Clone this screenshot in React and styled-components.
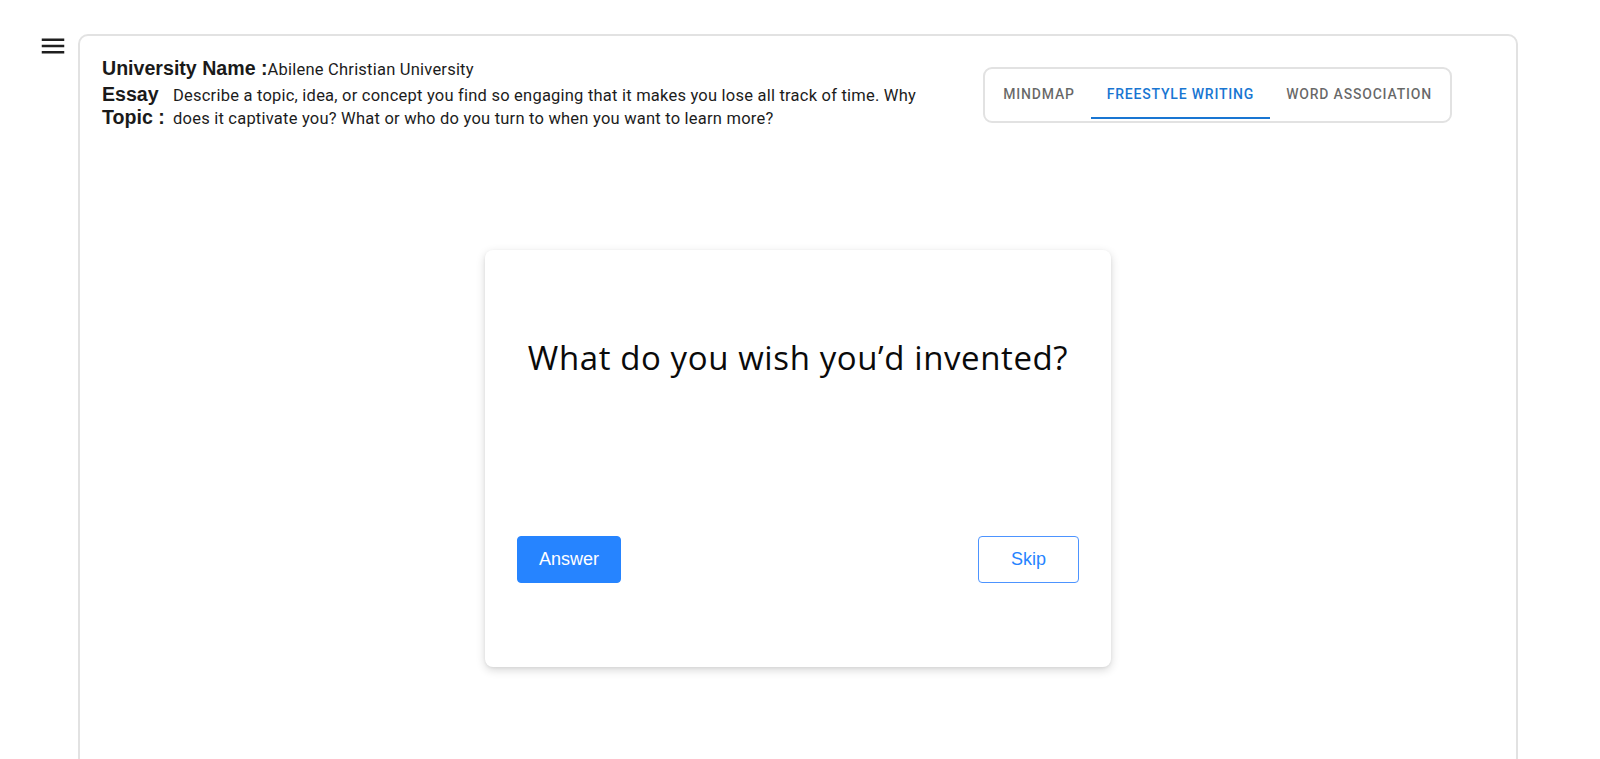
import React, { useState } from "react";
import styled, { createGlobalStyle } from "styled-components";

const GlobalStyle = createGlobalStyle`
  html, body {
    margin: 0;
    padding: 0;
    background: #ffffff;
    overflow: hidden;
    font-family: Roboto, "Liberation Sans", Arial, sans-serif;
  }
  * { box-sizing: border-box; }
`;

const Page = styled.div`
  display: flex;
  align-items: flex-start;
  padding: 31px 0 0 38px;
  height: 100vh;
`;

const MenuButton = styled.button`
  display: flex;
  align-items: center;
  justify-content: center;
  width: 30px;
  height: 30px;
  padding: 0;
  margin-right: 10px;
  border: none;
  background: transparent;
  color: #1f1f1f;
  cursor: pointer;
`;

const Panel = styled.main`
  width: 1440px;
  height: 800px;
  margin-top: 3px;
  border: 2px solid #e2e2e2;
  border-radius: 10px;
  padding-top: 19px;
  display: flex;
  flex-direction: column;
`;

const Header = styled.header`
  display: flex;
  justify-content: space-between;
  align-items: flex-start;
  padding: 0 64px 0 22px;
`;

const Info = styled.div`
  display: flex;
  flex-direction: column;
`;

const InfoRow = styled.div`
  display: flex;
  align-items: baseline;
  gap: ${(p) => p.$gap || 0}px;
`;

const Label = styled.span`
  font-family: "Liberation Sans", Arial, sans-serif;
  font-weight: 700;
  font-size: 19.6px;
  line-height: ${(p) => p.$lh || 27}px;
  color: #1a1a1a;
  ${(p) => (p.$width ? `width: ${p.$width}px; flex: none;` : "")}
`;

const Value = styled.span`
  font-family: Roboto, "Liberation Sans", sans-serif;
  font-size: 16.5px;
  letter-spacing: 0.22px;
  line-height: ${(p) => p.$lh || 27}px;
  color: #1c1c1c;
  ${(p) => (p.$width ? `width: ${p.$width}px;` : "")}
`;

const TabBox = styled.div`
  display: flex;
  margin-top: 12px;
  padding: 2px;
  border: 2px solid #e2e2e2;
  border-radius: 9px;
`;

const Tab = styled.button`
  position: relative;
  height: 48px;
  min-width: 90px;
  padding: 12px 16px;
  border: none;
  background: transparent;
  font-family: Roboto, "Liberation Sans", sans-serif;
  font-weight: 500;
  font-size: 14px;
  line-height: 1.25;
  letter-spacing: 0.8px;
  text-transform: uppercase;
  color: ${(p) => (p.$active ? "#1976d2" : "rgba(0,0,0,0.6)")};
  cursor: pointer;

  &::after {
    content: "";
    position: absolute;
    left: 0;
    right: 0;
    bottom: 0;
    height: 2px;
    background: ${(p) => (p.$active ? "#1976d2" : "transparent")};
  }
`;

const Card = styled.section`
  width: 626px;
  height: 417px;
  margin: 120px auto 0;
  padding: 88px 32px 84px;
  border-radius: 8px;
  background: #ffffff;
  box-shadow: 0 3px 10px rgba(0, 0, 0, 0.16), 0 1px 3px rgba(0, 0, 0, 0.06);
  display: flex;
  flex-direction: column;
`;

const Question = styled.h2`
  margin: 0;
  text-align: center;
  font-family: "Open Sans", "Noto Sans", sans-serif;
  font-weight: 400;
  font-size: 33px;
  line-height: 1.2;
  letter-spacing: 0.6px;
  color: #0a0a0a;
`;

const Actions = styled.div`
  margin-top: auto;
  display: flex;
  justify-content: space-between;
`;

const ActionButton = styled.button`
  height: 47px;
  min-width: 101px;
  padding: 0 21px;
  border-radius: 4px;
  font-family: "Liberation Sans", Arial, sans-serif;
  font-size: 18px;
  cursor: pointer;
  border: 1px solid ${(p) => (p.$primary ? "#2684ff" : "#4d94ff")};
  background: ${(p) => (p.$primary ? "#2684ff" : "#ffffff")};
  color: ${(p) => (p.$primary ? "#ffffff" : "#2684ff")};
`;

const MenuIcon = () => (
  <svg width="30" height="30" viewBox="0 0 24 24" fill="currentColor" aria-hidden="true">
    <path d="M3 18h18v-2H3v2zm0-5h18v-2H3v2zm0-7v2h18V6H3z" />
  </svg>
);

const TABS = ["Mindmap", "Freestyle Writing", "Word Association"];

export default function App() {
  const [tab, setTab] = useState(1);
  return (
    <>
      <GlobalStyle />
      <Page>
        <MenuButton aria-label="menu">
          <MenuIcon />
        </MenuButton>
        <Panel>
          <Header>
            <Info>
              <InfoRow>
                <Label>University Name :</Label>
                <Value>Abilene Christian University</Value>
              </InfoRow>
              <InfoRow $gap={5}>
                <Label $width={66} $lh={23}>
                  Essay Topic :
                </Label>
                <Value $width={780} $lh={23}>
                  Describe a topic, idea, or concept you find so engaging that it makes you lose all
                  track of time. Why does it captivate you? What or who do you turn to when you want
                  to learn more?
                </Value>
              </InfoRow>
            </Info>
            <TabBox>
              {TABS.map((t, i) => (
                <Tab key={t} $active={i === tab} onClick={() => setTab(i)}>
                  {t}
                </Tab>
              ))}
            </TabBox>
          </Header>
          <Card>
            <Question>What do you wish you’d invented?</Question>
            <Actions>
              <ActionButton $primary>Answer</ActionButton>
              <ActionButton>Skip</ActionButton>
            </Actions>
          </Card>
        </Panel>
      </Page>
    </>
  );
}
